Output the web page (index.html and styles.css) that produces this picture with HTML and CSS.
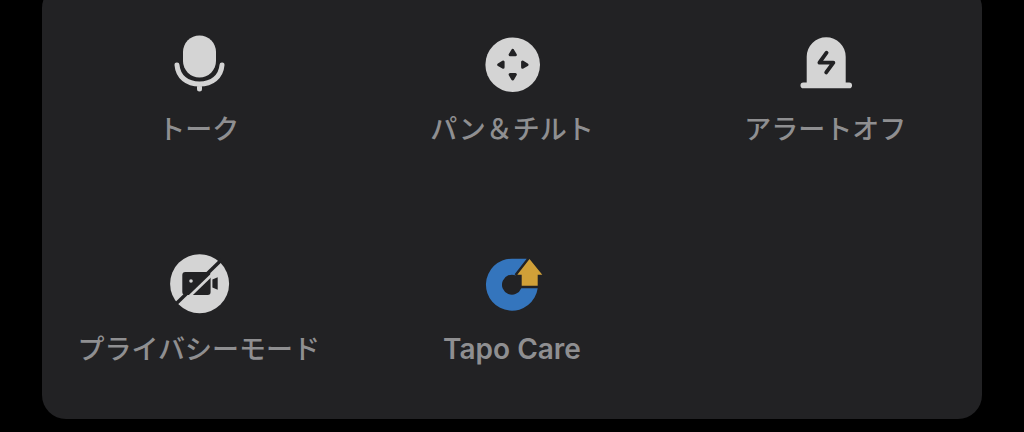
FILE: index.html
```html
<!DOCTYPE html>
<html lang="ja">
<head>
    <meta charset="UTF-8">
    <meta name="viewport" content="width=device-width, initial-scale=1.0">
    <title>Tapo</title>
    <link rel="stylesheet" href="styles.css">
</head>
<body>

    <main class="panel">
        <button type="button" class="action">
            <svg class="icon" viewBox="0 0 60 60" aria-hidden="true">
                <rect class="light" x="14" y="1.5" width="33" height="42" rx="16.5"/>
                <path class="mic-stand" d="M8 31C9 43 18 50 30.5 50S52 43 53 31M30.5 50v5"/>
            </svg>
            <span class="label">トーク</span>
        </button>

        <button type="button" class="action">
            <svg class="icon" viewBox="0 0 60 60" aria-hidden="true">
                <circle class="light" cx="30.7" cy="30.7" r="27.3"/>
                <path class="arrows" d="M30.7 16.4l2.6 4.4h-5.2zM30.7 45l2.6-4.4h-5.2zM16.7 30.7l4.4-2.6v5.2zM45 30.7l-4.4-2.6v5.2z"/>
            </svg>
            <span class="label">パン＆チルト</span>
        </button>

        <button type="button" class="action">
            <svg class="icon" viewBox="0 0 60 60" aria-hidden="true">
                <path class="light" d="M11.7 50V22.8a19.5 19.5 0 0 1 39 0V50z"/>
                <rect class="light" x="5.5" y="48.5" width="51.5" height="5.7" rx="2.8"/>
                <path class="bolt" d="M31.6 18.7L24.4 28.7H38.4L31.2 38.4"/>
            </svg>
            <span class="label">アラートオフ</span>
        </button>

        <button type="button" class="action">
            <svg class="icon" viewBox="0 0 60 60" aria-hidden="true">
                <circle class="light" cx="30.6" cy="29.7" r="29.5"/>
                <rect class="dark" x="13.3" y="18" width="28.3" height="23" rx="3"/>
                <path class="dark" d="M43.4 25.5l5.3-2.2v12.4l-5.3-2.2z"/>
                <circle class="light" cx="22" cy="27" r="1.8"/>
                <path class="slash-light" d="M46 17.7L18 44.8"/>
                <path class="slash-dark" d="M52.6 5.8L6.6 50.2"/>
            </svg>
            <span class="label">プライバシーモード</span>
        </button>

        <button type="button" class="action">
            <svg class="icon" viewBox="0 0 60 60" aria-hidden="true">
                <path class="ring" d="M44.7 4.7H30A26 26 0 1 0 55.7 34.3H39.3A10 10 0 1 1 34 21.5L32.6 20.3z"/>
                <path class="upgrade" d="M47.5 5L60.3 20.7H55.7V31.7H39.7V20.7H35.3z"/>
            </svg>
            <span class="label label-latin">Tapo Care</span>
        </button>
    </main>

</body>
</html>
```

FILE: styles.css
```css
body {
    margin: 0;
    background-color: #000;
    font-family: Inter, "Noto Sans CJK JP", sans-serif;
}
/* the top of the sheet is scrolled just out of view */
.panel {
    display: grid;
    grid-template-columns: repeat(3, 1fr);
    row-gap: 108px;
    margin: -16px 42px 0;
    padding: 50px 0 53px;
    border-radius: 24px;
    background-color: #222224;
}
.action {
    display: flex;
    flex-direction: column;
    align-items: center;
    gap: 19px;
    padding: 0;
    border: none;
    background: none;
    color: #8f8f91;
    font: inherit;
    cursor: pointer;
}
.icon {
    width: 60px;
    height: 60px;
    overflow: visible;
}
.label {
    font-size: 27px;
    font-weight: 500;
    line-height: 33px;
    white-space: nowrap;
}
.label-latin {
    font-size: 28px;
    font-weight: 600;
}
.light {
    fill: #d4d4d4;
}
.dark {
    fill: #222224;
}
.mic-stand {
    fill: none;
    stroke: #d4d4d4;
    stroke-width: 5;
    stroke-linecap: round;
}
.arrows {
    fill: #222224;
    stroke: #222224;
    stroke-width: 3;
    stroke-linejoin: round;
}
.bolt {
    fill: none;
    stroke: #222224;
    stroke-width: 3.8;
    stroke-linecap: round;
    stroke-linejoin: round;
}
.slash-light {
    stroke: #d4d4d4;
    stroke-width: 2.8;
}
.slash-dark {
    stroke: #222224;
    stroke-width: 3.4;
}
.ring {
    fill: #3475bd;
}
.upgrade {
    fill: #d0a038;
}
```
